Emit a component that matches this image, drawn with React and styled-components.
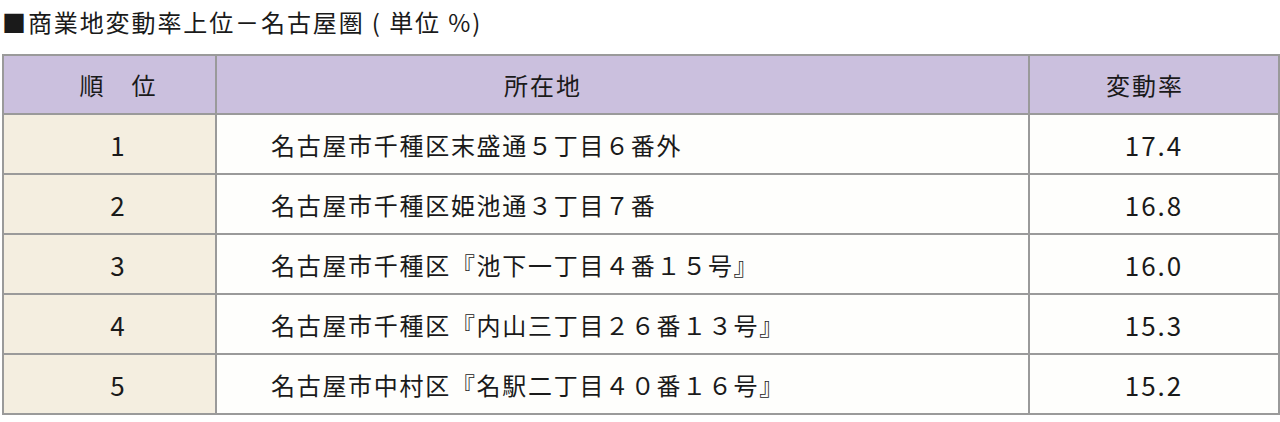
import React from "react";
import styled, { createGlobalStyle } from "styled-components";

const Global = createGlobalStyle`
  html, body { margin: 0; padding: 0; background: #ffffff; }
  body { font-family: "Noto Sans CJK JP", "Noto Sans", sans-serif; color: #1a1a1a; }
`;

const Page = styled.div`
  width: 1280px;
  height: 422px;
  padding: 6px 2px 0 2px;
  box-sizing: border-box;
  display: flex;
  flex-direction: column;
  gap: 16px;
`;

const Title = styled.h2`
  margin: 0;
  font-size: 24px;
  font-weight: 400;
  line-height: 32px;
  letter-spacing: 1.9px;
`;

const Table = styled.table`
  width: 1276px;
  border-collapse: collapse;
  table-layout: fixed;
  border: 2px solid #9a9a9a;
`;

const HeadCell = styled.th`
  background: #cbc0de;
  border: 2px solid #9a9a9a;
  height: 59px;
  padding: 0;
  font-size: 24px;
  font-weight: 400;
  letter-spacing: 2px;
  text-align: ${(p) => p.$align || "center"};
  padding-left: ${(p) => p.$pl || 0}px;
  padding-right: ${(p) => p.$pr || 0}px;
  box-sizing: border-box;
`;

const RankCell = styled.td`
  background: #f4eee0;
  border: 2px solid #9a9a9a;
  height: 60px;
  padding: 0 0 0 16px;
  text-align: center;
  font-size: 26px;
  box-sizing: border-box;
`;

const AddrCell = styled.td`
  background: #fefefc;
  border: 2px solid #9a9a9a;
  padding: 0 0 0 54px;
  font-size: 24px;
  letter-spacing: 1.7px;
  text-align: left;
  box-sizing: border-box;
`;

const RateCell = styled.td`
  background: #fefefc;
  border: 2px solid #9a9a9a;
  padding: 0;
  text-align: center;
  font-size: 26px;
  letter-spacing: 2px;
  box-sizing: border-box;
`;

const rows = [
  ["1", "名古屋市千種区末盛通５丁目６番外", "17.4"],
  ["2", "名古屋市千種区姫池通３丁目７番", "16.8"],
  ["3", "名古屋市千種区『池下一丁目４番１５号』", "16.0"],
  ["4", "名古屋市千種区『内山三丁目２６番１３号』", "15.3"],
  ["5", "名古屋市中村区『名駅二丁目４０番１６号』", "15.2"],
];

export default function App() {
  return (
    <>
      <Global />
      <Page>
        <Title>■商業地変動率上位－名古屋圏 ( 単位 %)</Title>
        <Table>
          <colgroup>
            <col style={{ width: 213 }} />
            <col style={{ width: 813 }} />
            <col style={{ width: 250 }} />
          </colgroup>
          <thead>
            <tr>
              <HeadCell $pl={18}>順　位</HeadCell>
              <HeadCell $align="left" $pl={287}>所在地</HeadCell>
              <HeadCell $pr={18}>変動率</HeadCell>
            </tr>
          </thead>
          <tbody>
            {rows.map(([r, a, v]) => (
              <tr key={r}>
                <RankCell>{r}</RankCell>
                <AddrCell>{a}</AddrCell>
                <RateCell>{v}</RateCell>
              </tr>
            ))}
          </tbody>
        </Table>
      </Page>
    </>
  );
}
